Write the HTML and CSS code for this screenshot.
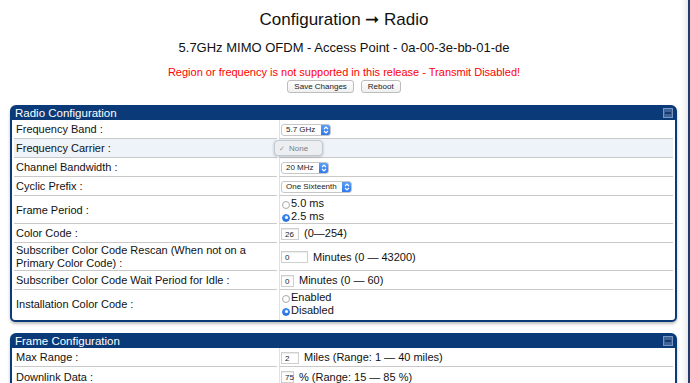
FILE: index.html
```html
<!DOCTYPE html>
<html>
<head>
<meta charset="utf-8">
<link rel="stylesheet" href="styles.css">
</head>
<body>
<div class="page">
  <h1 class="title">Configuration ➞ Radio</h1>
  <h2 class="subtitle">5.7GHz MIMO OFDM - Access Point - 0a-00-3e-bb-01-de</h2>
  <p class="warning">Region or frequency is not supported in this release - Transmit Disabled!</p>
  <div class="actions">
    <button class="btn">Save Changes</button>
    <button class="btn">Reboot</button>
  </div>

  <div class="panel">
    <div class="panel-head"><span>Radio Configuration</span><span class="collapse"></span></div>
    <table class="form">
      <tr>
        <td class="label">Frequency Band :</td>
        <td class="value"><div class="field"><span class="select w50">5.7 GHz<span class="stepper"><svg width="10" height="12" viewBox="0 0 10 12"><path d="M3 5 L5 3 L7 5 M3 7 L5 9 L7 7" fill="none" stroke="#fff" stroke-width="1.2"/></svg></span></span></div></td>
      </tr>
      <tr class="active">
        <td class="label">Frequency Carrier :</td>
        <td class="value"><div class="field"><span class="menu"><span class="check">✓</span>None</span></div></td>
      </tr>
      <tr>
        <td class="label">Channel Bandwidth :</td>
        <td class="value"><div class="field"><span class="select w48">20 MHz<span class="stepper"><svg width="10" height="12" viewBox="0 0 10 12"><path d="M3 5 L5 3 L7 5 M3 7 L5 9 L7 7" fill="none" stroke="#fff" stroke-width="1.2"/></svg></span></span></div></td>
      </tr>
      <tr>
        <td class="label">Cyclic Prefix :</td>
        <td class="value"><div class="field"><span class="select w71">One Sixteenth<span class="stepper"><svg width="10" height="12" viewBox="0 0 10 12"><path d="M3 5 L5 3 L7 5 M3 7 L5 9 L7 7" fill="none" stroke="#fff" stroke-width="1.2"/></svg></span></span></div></td>
      </tr>
      <tr>
        <td class="label">Frame Period :</td>
        <td class="value">
          <div class="radios">
            <label class="radio"><span class="dot"></span>5.0 ms</label>
            <label class="radio"><span class="dot on"></span>2.5 ms</label>
          </div>
        </td>
      </tr>
      <tr>
        <td class="label">Color Code :</td>
        <td class="value"><div class="field"><span class="input w18">26</span><span>(0—254)</span></div></td>
      </tr>
      <tr>
        <td class="label">Subscriber Color Code Rescan (When not on a Primary Color Code) :</td>
        <td class="value"><div class="field"><span class="input w27">0</span><span>Minutes (0 — 43200)</span></div></td>
      </tr>
      <tr>
        <td class="label">Subscriber Color Code Wait Period for Idle :</td>
        <td class="value"><div class="field"><span class="input w13">0</span><span>Minutes (0 — 60)</span></div></td>
      </tr>
      <tr class="last">
        <td class="label">Installation Color Code :</td>
        <td class="value">
          <div class="radios">
            <label class="radio"><span class="dot"></span>Enabled</label>
            <label class="radio"><span class="dot on"></span>Disabled</label>
          </div>
        </td>
      </tr>
    </table>
  </div>

  <div class="panel second">
    <div class="panel-head"><span>Frame Configuration</span><span class="collapse"></span></div>
    <table class="form">
      <tr>
        <td class="label">Max Range :</td>
        <td class="value"><div class="field"><span class="input w18">2</span><span>Miles (Range: 1 — 40 miles)</span></div></td>
      </tr>
      <tr>
        <td class="label">Downlink Data :</td>
        <td class="value"><div class="field"><span class="input w13">75</span><span>% (Range: 15 — 85 %)</span></div></td>
      </tr>
    </table>
  </div>
</div>
</body>
</html>
```

FILE: styles.css
```css
* {
  box-sizing: border-box;
}
body {
  margin: 0;
  background: #fff;
  color: #111;
  font-family: "Liberation Sans", Arial, sans-serif;
}
.page {
  width: 690px;
  min-height: 383px;
  padding-top: 9px;
  border-right: 2px solid #1d3b6c;
  box-shadow: inset -7px 0 6px -5px rgba(0, 0, 0, 0.12);
}
.title {
  margin: 0;
  font-size: 17px;
  font-weight: normal;
  line-height: 22px;
  text-align: center;
}
.subtitle {
  margin: 8px 0 0;
  font-size: 13px;
  font-weight: normal;
  line-height: 18px;
  text-align: center;
}
.warning {
  margin: 8px 0 0;
  color: #f00;
  font-size: 11px;
  line-height: 14px;
  text-align: center;
}
.actions {
  display: flex;
  justify-content: center;
  gap: 7px;
  margin-top: 1px;
}
.btn {
  height: 13px;
  padding: 0 6px;
  border: 1px solid #bdbdbd;
  border-radius: 3px;
  background: linear-gradient(#fff, #efefef);
  font: 8px "Liberation Sans", Arial, sans-serif;
  color: #222;
  line-height: 11px;
}

/* panels */
.panel {
  margin: 12px 11px 0 10px;
  border: 2px solid #0b3a78;
  border-radius: 6px 6px 5px 5px;
  background: #fff;
  box-shadow: 0 2px 3px rgba(0, 0, 0, 0.25);
}
.panel.second {
  margin-top: 11px;
}
.panel-head {
  display: flex;
  justify-content: space-between;
  align-items: center;
  height: 13px;
  padding: 0 2px 0 3px;
  background: #0b3a78;
  color: #fff;
  font-size: 11.5px;
  line-height: 13px;
}
.collapse {
  display: flex;
  align-items: center;
  justify-content: center;
  width: 10px;
  height: 10px;
  margin-top: -2px;
  background: #3d6399;
  border: 1px solid #7a96c0;
}
.collapse::after {
  content: "";
  width: 6px;
  height: 2px;
  background: #17396a;
}

/* form rows */
.form {
  width: 100%;
  border-collapse: separate;
  border-spacing: 2px 0;
}
.form td {
  height: 19px;
  padding: 1px 3px 0 2px;
  border-bottom: 1px solid #c9c9c9;
  font-size: 11px;
  line-height: 13px;
  vertical-align: middle;
}
.form .label {
  width: 263px;
}
.form .value {
  position: relative;
  padding-left: 1px;
  border-left: 1px solid #e2e2e2;
}
.form tr:last-child td {
  border-bottom: none;
}
.form tr.last td {
  padding-bottom: 3px;
}
.form tr.active td {
  background: #eef2f9;
}
.field {
  display: flex;
  align-items: center;
  gap: 5px;
}

.select {
  display: inline-flex;
  flex: none;
  align-items: center;
  justify-content: space-between;
  height: 12px;
  padding-left: 4px;
  border: 1px solid #c6c6c6;
  border-radius: 3px;
  background: #fff;
  font-size: 8px;
  line-height: 10px;
  color: #222;
  overflow: hidden;
}
.stepper {
  display: flex;
  height: 12px;
  width: 10px;
  margin: -1px -1px -1px 0;
  border-radius: 0 3px 3px 0;
  background: linear-gradient(#5ba3f9, #2a74ec);
}
.w50 { width: 50px; }
.w48 { width: 48px; }
.w71 { width: 71px; }

.menu {
  position: absolute;
  left: -6px;
  top: 1px;
  display: flex;
  align-items: center;
  width: 49px;
  height: 16px;
  padding-left: 4px;
  border: 1px solid #c3c8ce;
  border-radius: 4px;
  background: #eceef1;
  box-shadow: 0 1px 3px rgba(0, 0, 0, 0.2);
  color: #7a7d82;
  font-size: 8px;
}
.check {
  margin-right: 4px;
  font-size: 7px;
  color: #999;
}

.input {
  display: inline-block;
  flex: none;
  height: 12px;
  padding-left: 3px;
  border: 1px solid #cfcfcf;
  box-shadow: inset 0 1px 1px rgba(0, 0, 0, 0.08);
  background: #fff;
  font-size: 8px;
  line-height: 11px;
  color: #222;
}
.w18 { width: 18px; }
.w27 { width: 27px; }
.w13 { width: 13px; }

.radios {
  display: flex;
  flex-direction: column;
}
.radio {
  display: flex;
  align-items: center;
  font-size: 11px;
  line-height: 13px;
}
.dot {
  display: inline-flex;
  align-items: center;
  justify-content: center;
  width: 8px;
  height: 8px;
  margin: 2px 1px 0 1px;
  border: 1px solid #a8a8a8;
  border-radius: 50%;
  background: #fff;
}
.dot.on {
  border-color: #2d74e0;
  background: linear-gradient(#4d9af5, #1f6fe3);
}
.dot.on::after {
  content: "";
  width: 3px;
  height: 3px;
  border-radius: 50%;
  background: #fff;
}
```
